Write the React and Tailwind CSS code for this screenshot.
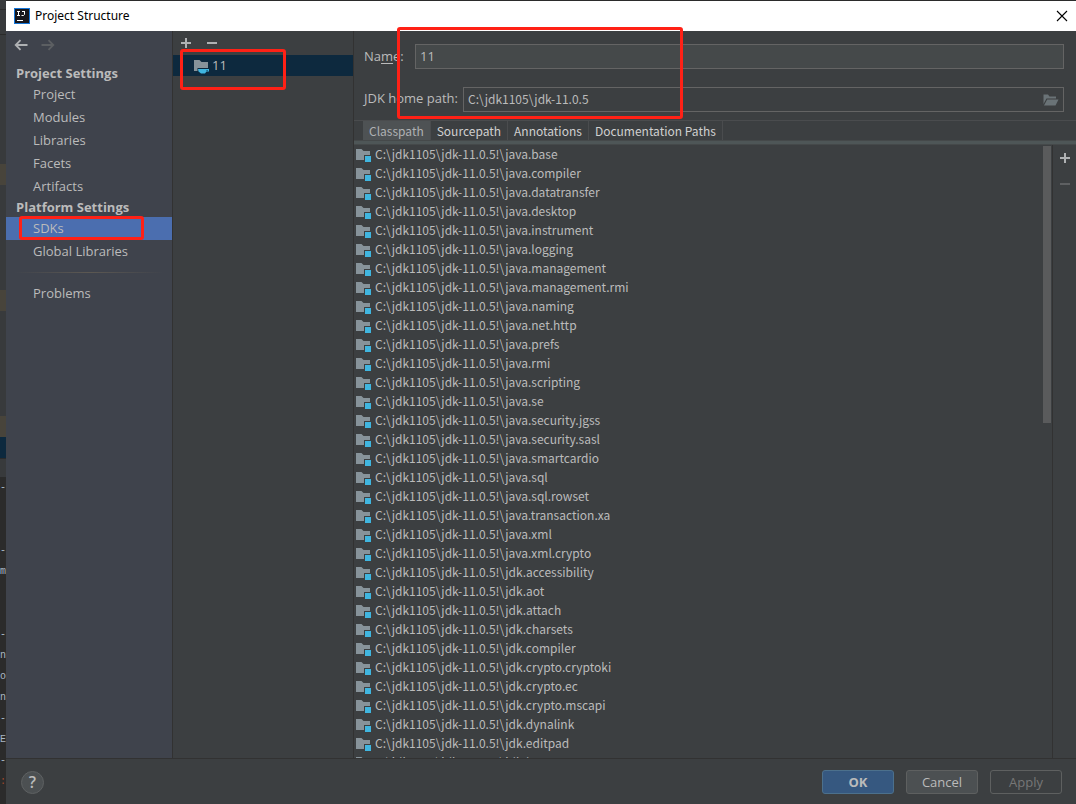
import React, { useState } from "react";

const projectItems = ["Project", "Modules", "Libraries", "Facets", "Artifacts"];
const platformItems = ["SDKs", "Global Libraries"];
const tabs = ["Classpath", "Sourcepath", "Annotations", "Documentation Paths"];

const modules = [
  "java.base",
  "java.compiler",
  "java.datatransfer",
  "java.desktop",
  "java.instrument",
  "java.logging",
  "java.management",
  "java.management.rmi",
  "java.naming",
  "java.net.http",
  "java.prefs",
  "java.rmi",
  "java.scripting",
  "java.se",
  "java.security.jgss",
  "java.security.sasl",
  "java.smartcardio",
  "java.sql",
  "java.sql.rowset",
  "java.transaction.xa",
  "java.xml",
  "java.xml.crypto",
  "jdk.accessibility",
  "jdk.aot",
  "jdk.attach",
  "jdk.charsets",
  "jdk.compiler",
  "jdk.crypto.cryptoki",
  "jdk.crypto.ec",
  "jdk.crypto.mscapi",
  "jdk.dynalink",
  "jdk.editpad",
  "jdk.hotspot.agent",
];

// the editor lines that peek out behind the dialog
const editorLines = ["-", "", "", "-", "m", "", "", "-", "n", "o", "n", "-", "E", "-", ":"];

function PlusIcon() {
  return (
    <svg width="10" height="10" viewBox="0 0 10 10" fill="#afb1b3">
      <path d="M4 0h2v4h4v2H6v4H4V6H0V4h4z" />
    </svg>
  );
}

function MinusIcon({ color }) {
  return (
    <svg width="10" height="10" viewBox="0 0 10 10" fill={color}>
      <path d="M0 4h10v2H0z" />
    </svg>
  );
}

function ArrowIcon({ color, flip }) {
  return (
    <svg width="14" height="12" viewBox="0 0 14 12" fill="none" stroke={color} strokeWidth="1.8">
      <path d={flip ? "M0.500 6H12M7.500 1.200L12.300 6L7.500 10.800" : "M13.500 6H2M6.500 1.200L1.700 6L6.500 10.800"} />
    </svg>
  );
}

function ModuleFolderIcon() {
  return (
    <svg width="16" height="14" viewBox="0 0 16 14" className="shrink-0">
      <path d="M0 1h5.500l2 2H14v4H8v5H0z" fill="#87939a" />
      <path d="M9 8h6v6H9z" fill="#40b6e0" />
    </svg>
  );
}

function JdkFolderIcon() {
  return (
    <svg width="16" height="16" viewBox="0 0 16 16" className="shrink-0">
      <path d="M1 2h5.500l2 2H15v6H4.500v3H1z" fill="#87939a" />
      <path d="M5 11h11v2.500h-2.500L12 15.500H8L5.500 13.500z" fill="#40b6e0" />
      <path d="M13.500 12h1.200v.8h-1.200z" fill="#0d293e" />
    </svg>
  );
}

function OpenFolderIcon() {
  return (
    <svg width="16" height="12" viewBox="0 0 16 12" fill="#6a7377">
      <path d="M0.500 0.500h4.500l1.500 2h6.500v2H3.500L0.500 10z" />
      <path d="M4.200 5.500H15.500L12.500 11.500H1z" />
    </svg>
  );
}

function IdeaLogo() {
  return (
    <svg width="16" height="16" viewBox="0 0 16 16">
      <path d="M0 0h16v16H0z" fill="#1676d8" />
      <path d="M1 1h14v14H1z" fill="#16161c" />
      <path
        d="M3 3.500h3M4.500 3.500v4M3 7.500h3M8 3.500h3M10.500 3.500v3L9.500 7.500H7.500M3 12.500h6"
        fill="none"
        stroke="#fff"
        strokeWidth="1"
      />
    </svg>
  );
}

function NavItem({ name, selected, onSelect }) {
  return (
    <a
      href="#"
      onClick={(e) => {
        e.preventDefault();
        onSelect(name);
      }}
      className={`flex h-[23px] items-center pl-[27px] ${selected ? "bg-[#4b6eaf]" : ""}`}
    >
      {name}
    </a>
  );
}

function Sidebar() {
  const [active, setActive] = useState("SDKs");

  return (
    <nav className="flex w-[167px] shrink-0 flex-col border-r border-[#323232] bg-[#3f434c]">
      <div className="flex h-[33px] items-center gap-[13px] px-2 pb-[6px]">
        <button aria-label="Back">
          <ArrowIcon color="#afb1b3" />
        </button>
        <button aria-label="Forward" disabled>
          <ArrowIcon color="#5c5f62" flip />
        </button>
      </div>
      <h2 className="flex h-[19px] items-center pl-[10px] font-bold">Project Settings</h2>
      {projectItems.map((item) => (
        <NavItem key={item} name={item} selected={active === item} onSelect={setActive} />
      ))}
      <h2 className="flex h-[19px] items-center pl-[10px] font-bold">Platform Settings</h2>
      {platformItems.map((item) => (
        <NavItem key={item} name={item} selected={active === item} onSelect={setActive} />
      ))}
      <div className="mx-2 my-[9px] h-px bg-linear-to-r from-transparent via-[#5c5852] to-transparent" />
      <NavItem name="Problems" selected={active === "Problems"} onSelect={setActive} />
    </nav>
  );
}

function SdkList() {
  return (
    <section className="flex w-[181px] shrink-0 flex-col border-r border-[#323232]">
      <div className="flex h-6 items-center gap-4 px-2">
        <button aria-label="Add SDK">
          <PlusIcon />
        </button>
        <button aria-label="Remove SDK">
          <MinusIcon color="#afb1b3" />
        </button>
      </div>
      <button className="flex h-[21px] items-center gap-[3px] bg-[#0d293e] pl-5 text-left">
        <JdkFolderIcon />
        11
      </button>
    </section>
  );
}

function SdkEditor() {
  const [name, setName] = useState("11");
  const [path, setPath] = useState("C:\\jdk1105\\jdk-11.0.5");
  const [tab, setTab] = useState("Classpath");

  return (
    <section className="flex min-w-0 flex-1 flex-col">
      <div className="flex flex-col gap-[18px] pt-[13px] pr-3 pb-2 pl-[10px]">
        <div className="flex h-[25px] items-center">
          <label htmlFor="name" className="w-[51px]">
            Na<span className="underline underline-offset-2">m</span>e:
          </label>
          <input
            id="name"
            value={name}
            onChange={(e) => setName(e.target.value)}
            className="h-[25px] min-w-0 flex-1 border border-[#646464] bg-[#45494a] px-1 pb-[2px] outline-none"
          />
        </div>
        <div className="flex h-[25px] items-center">
          <label htmlFor="path" className="w-[99px] pb-[2px]">
            JDK home path:
          </label>
          <div className="flex h-[25px] min-w-0 flex-1 items-center border border-[#646464] pr-1">
            <input
              id="path"
              value={path}
              onChange={(e) => setPath(e.target.value)}
              className="min-w-0 flex-1 px-1 pb-[2px] font-['Noto_Sans_CJK_SC',sans-serif] text-[12px] outline-none"
            />
            <button aria-label="Browse">
              <OpenFolderIcon />
            </button>
          </div>
        </div>
      </div>

      <div
        className="flex h-5 shrink-0 border-t border-[#4a4c4e] pl-[9px] font-['Noto_Sans_CJK_SC',sans-serif] text-[12px]"
        role="tablist"
      >
        {tabs.map((t) => (
          <button
            key={t}
            role="tab"
            aria-selected={tab === t}
            onClick={() => setTab(t)}
            className={`flex items-center border-r border-[#4a4c4e] px-[6px] leading-[19px] whitespace-nowrap ${
              tab === t ? "bg-[#4e5254] text-[#afb1b3]" : "text-[#d0d0d0]"
            }`}
          >
            {t}
          </button>
        ))}
      </div>
      <div className="h-[5px] shrink-0 border-y border-[#45494a] bg-[#4e5657]" />

      <div className="flex min-h-0 flex-1">
        <ul className="min-w-0 flex-1 overflow-hidden font-['Noto_Sans_CJK_SC',sans-serif] text-[12px] leading-[17px]">
          {modules.map((m) => (
            <li key={m} className="flex h-[19px] items-center gap-[3px] pl-[2px]">
              <ModuleFolderIcon />
              <span className="pb-[2px]">{`C:\\jdk1105\\jdk-11.0.5!\\${m}`}</span>
            </li>
          ))}
        </ul>
        <div className="w-[9px] shrink-0 pt-px pr-px">
          <div className="h-[277px] bg-[#5a5b5c]" />
        </div>
        <div className="flex w-6 shrink-0 flex-col items-center gap-4 border-l border-[#323232] pt-2">
          <button aria-label="Add path">
            <PlusIcon />
          </button>
          <button aria-label="Remove path" disabled>
            <MinusIcon color="#5e6062" />
          </button>
        </div>
      </div>
    </section>
  );
}

function EditorEdge() {
  return (
    <div aria-hidden="true" className="flex w-[6px] shrink-0 flex-col overflow-hidden bg-[#383a3c]">
      <div className="h-[10px] shrink-0 border-b border-[#2b2b2b]" />
      <div className="h-[25px] shrink-0 border-b border-[#2b2b2b]" />
      <div className="mt-[129px] h-[21px] shrink-0 bg-[#48443b]" />
      <div className="mt-[105px] h-[21px] shrink-0 bg-[#48443b]" />
      <div className="mt-[105px] h-[21px] shrink-0 bg-[#48443b]" />
      <div className="h-[21px] shrink-0 bg-[#0d293e]" />
      <div className="h-[19px] shrink-0 border-t border-[#2b2b2b]" />
      <div className="min-h-0 flex-1 overflow-hidden bg-[#2b2b2b] font-['Liberation_Mono',monospace] text-[10px] leading-[21px] text-[#a9b7c6]">
        {editorLines.map((line, i) => (
          <div key={i} className={`h-[21px] ${line === ":" ? "text-[#a5482a]" : ""}`}>
            {line}
          </div>
        ))}
      </div>
    </div>
  );
}

function App() {
  return (
    <div className="relative flex h-screen overflow-hidden bg-[#3c3f41] font-['Open_Sans',sans-serif] text-[13px] leading-[19px] text-[#bbbbbb]">
      <EditorEdge />

      <div className="flex min-w-0 flex-1 flex-col border-t border-[#2b2b2b]">
        <header className="flex h-[30px] shrink-0 items-center bg-white pr-2 pl-2 text-black">
          <IdeaLogo />
          <h1 className="flex-1 pb-px pl-[5px] font-['Noto_Sans',sans-serif] text-[12px]">Project Structure</h1>
          <button aria-label="Close">
            <svg width="12" height="12" viewBox="0 0 12 12" stroke="#000" strokeWidth="1.100">
              <path d="M1 1L11 11M11 1L1 11" />
            </svg>
          </button>
        </header>

        <main className="flex min-h-0 flex-1">
          <Sidebar />
          <SdkList />
          <SdkEditor />
        </main>

        <footer className="flex h-[46px] shrink-0 items-center gap-3 border-t border-[#323232] pt-px pr-[14px] pl-[15px]">
          <button
            aria-label="Help"
            className="mr-auto flex size-[23px] items-center justify-center rounded-full border border-[#5e6162] bg-[#4c5052] text-[16px] font-semibold"
          >
            ?
          </button>
          <button className="h-6 w-[72px] rounded-[3px] border border-[#4c708c] bg-[#365880] font-bold">OK</button>
          <button className="h-6 w-[72px] rounded-[3px] border border-[#5e6060] bg-[#4c5052]">Cancel</button>
          <button disabled className="h-6 w-[72px] rounded-[3px] border border-[#5e6060] text-[#777777]">
            Apply
          </button>
        </footer>
      </div>

      {/* highlight boxes */}
      <div className="pointer-events-none absolute top-[216px] left-[19px] h-6 w-[125px] rounded-[3px] border-[3px] border-[#ff2116]" />
      <div className="pointer-events-none absolute top-[49px] left-[180px] h-[41px] w-[106px] rounded-[3px] border-[3px] border-[#ff2116]" />
      <div className="pointer-events-none absolute top-[27px] left-[397px] h-[92px] w-[286px] rounded-[3px] border-[3px] border-[#ff2116]" />
    </div>
  );
}

export default App;
